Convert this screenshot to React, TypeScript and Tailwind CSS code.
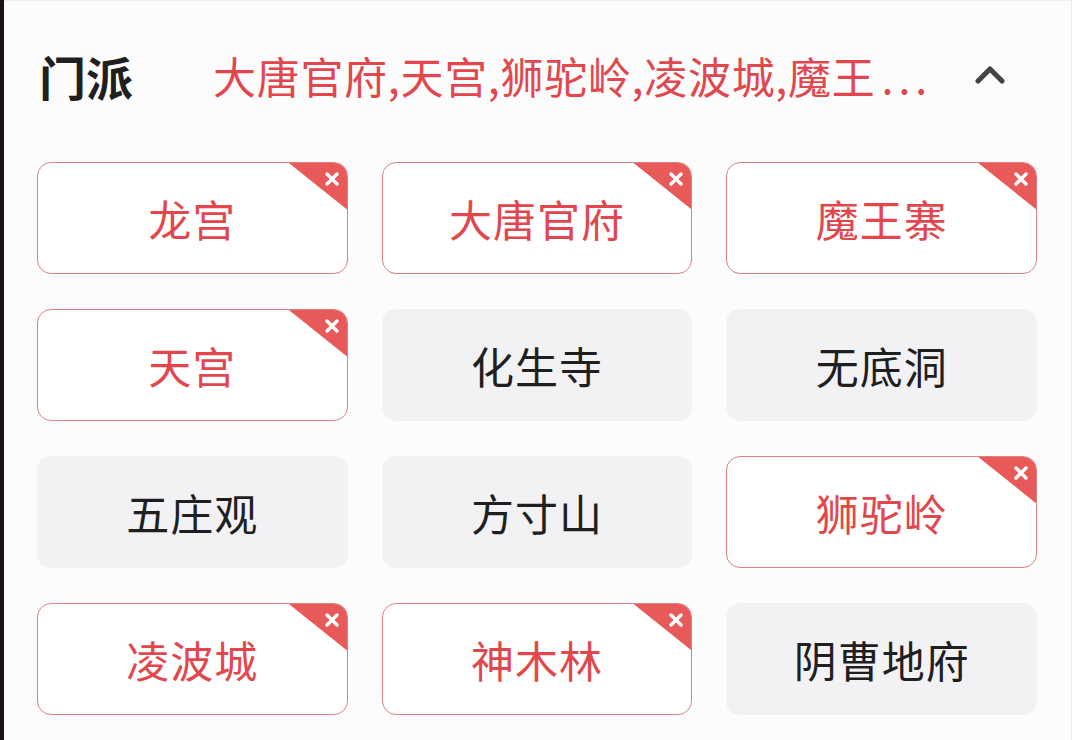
import React from "react";

const items: { name: string; selected: boolean }[] = [
  { name: "龙宫", selected: true },
  { name: "大唐官府", selected: true },
  { name: "魔王寨", selected: true },
  { name: "天宫", selected: true },
  { name: "化生寺", selected: false },
  { name: "无底洞", selected: false },
  { name: "五庄观", selected: false },
  { name: "方寸山", selected: false },
  { name: "狮驼岭", selected: true },
  { name: "凌波城", selected: true },
  { name: "神木林", selected: true },
  { name: "阴曹地府", selected: false },
];

function Tile({ name, selected }: { name: string; selected: boolean }) {
  if (!selected) {
    return (
      <div className="h-[112px] rounded-[14px] bg-[#f2f2f4] flex items-center justify-center text-[43px] tracking-[1px] text-[#1f1f1f] leading-none">
        {name}
      </div>
    );
  }
  return (
    <div className="relative h-[112px] rounded-[14px] border-[1.5px] border-[#dc8080] bg-white flex items-center justify-center text-[43px] tracking-[1px] text-[#e2474d] leading-none overflow-hidden">
      {name}
      <div className="absolute -top-px -right-px w-[60px] h-[48px] bg-[#e85a5a] [clip-path:polygon(0_0,100%_0,100%_100%)]" />
      <svg
        className="absolute top-[8px] right-[7px]"
        width="16"
        height="16"
        viewBox="0 0 16 16"
      >
        <path d="M3 3 L13 13 M13 3 L3 13" stroke="#fff" strokeWidth="3.4" strokeLinecap="round" />
      </svg>
    </div>
  );
}

export default function App() {
  return (
    <div
      className="w-[1072px] h-[740px] flex bg-[#fcfcfc] overflow-hidden"
      style={{ fontFamily: '"Noto Sans CJK SC", "Noto Sans", sans-serif' }}
    >
      <div className="w-[4px] h-full bg-[#1c1216]" />
      <div className="flex-1 flex flex-col pl-[33px] pr-[34px] border-t border-[#eeeeee] border-r">
        <div className="h-[160px] flex items-center pb-[4px] mt-[-4px] mb-[5px]">
          <div className="pl-[2px] w-[176px] text-[47px] font-bold text-[#1f1f1f] leading-none">门派</div>
          <div className="flex-1 text-[43px] tracking-[0.7px] text-[#e2474d] leading-none whitespace-nowrap">
            大唐官府,天宫,狮驼岭,凌波城,魔王<span className="ml-[6px] tracking-[5px]">...</span>
          </div>
          <svg className="mr-[32px]" width="30" height="20" viewBox="0 0 30 20">
            <path d="M3 16 L15 4 L27 16" stroke="#444" strokeWidth="5" fill="none" strokeLinecap="round" strokeLinejoin="round" />
          </svg>
        </div>
        <div className="grid grid-cols-3 gap-x-[34px] gap-y-[35px]">
          {items.map((it) => (
            <Tile key={it.name} name={it.name} selected={it.selected} />
          ))}
        </div>
      </div>
    </div>
  );
}
